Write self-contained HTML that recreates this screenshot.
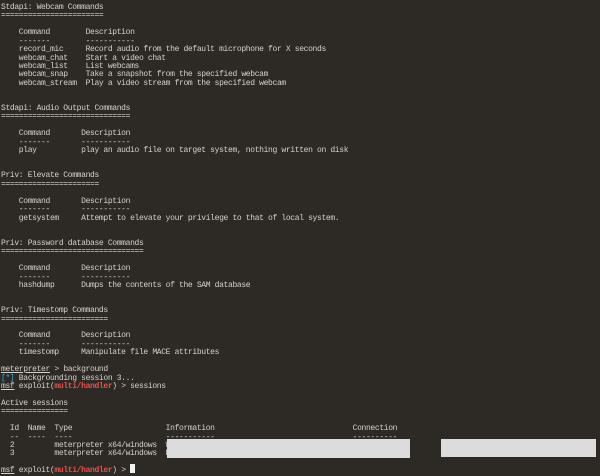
<!DOCTYPE html>
<html><head><meta charset="utf-8"><style>
html,body{margin:0;padding:0;background:#2d2925;width:600px;height:474px;overflow:hidden}
pre{margin:0;position:absolute;left:1px;top:4px;font-family:"Liberation Mono",monospace;font-size:8px;letter-spacing:-0.35px;line-height:8.42px;color:#d6d2ca}
.r{color:#e8514e;font-weight:bold}
.b{color:#3ba6d6}
.u{text-decoration:underline}
.box{position:absolute;background:#dcdcdc}
.cur{position:absolute;left:130px;top:464px;width:5px;height:9px;background:#f2f2f2}
</style></head><body>
<pre>Stdapi: Webcam Commands
=======================

    Command        Description
    -------        -----------
    record_mic     Record audio from the default microphone for X seconds
    webcam_chat    Start a video chat
    webcam_list    List webcams
    webcam_snap    Take a snapshot from the specified webcam
    webcam_stream  Play a video stream from the specified webcam


Stdapi: Audio Output Commands
=============================

    Command       Description
    -------       -----------
    play          play an audio file on target system, nothing written on disk


Priv: Elevate Commands
======================

    Command       Description
    -------       -----------
    getsystem     Attempt to elevate your privilege to that of local system.


Priv: Password database Commands
================================

    Command       Description
    -------       -----------
    hashdump      Dumps the contents of the SAM database


Priv: Timestomp Commands
========================

    Command       Description
    -------       -----------
    timestomp     Manipulate file MACE attributes

<span class="u">meterpreter</span> &gt; background
<span class="b">[*]</span> Backgrounding session 3...
<span class="u">msf</span> exploit(<span class="r">multi/handler</span>) &gt; sessions

Active sessions
===============

  Id  Name  Type                     Information                               Connection
  --  ----  ----                     -----------                               ----------
  2         meterpreter x64/windows  W                                         443 -&gt;
  3         meterpreter x64/windows  D                                         443 -&gt;

<span class="u">msf</span> exploit(<span class="r">multi/handler</span>) &gt; </pre>
<div class="box" style="left:167px;top:439px;width:243px;height:19px"></div>
<div class="box" style="left:441px;top:439px;width:155px;height:18px"></div>
<div class="cur"></div>
</body></html>
